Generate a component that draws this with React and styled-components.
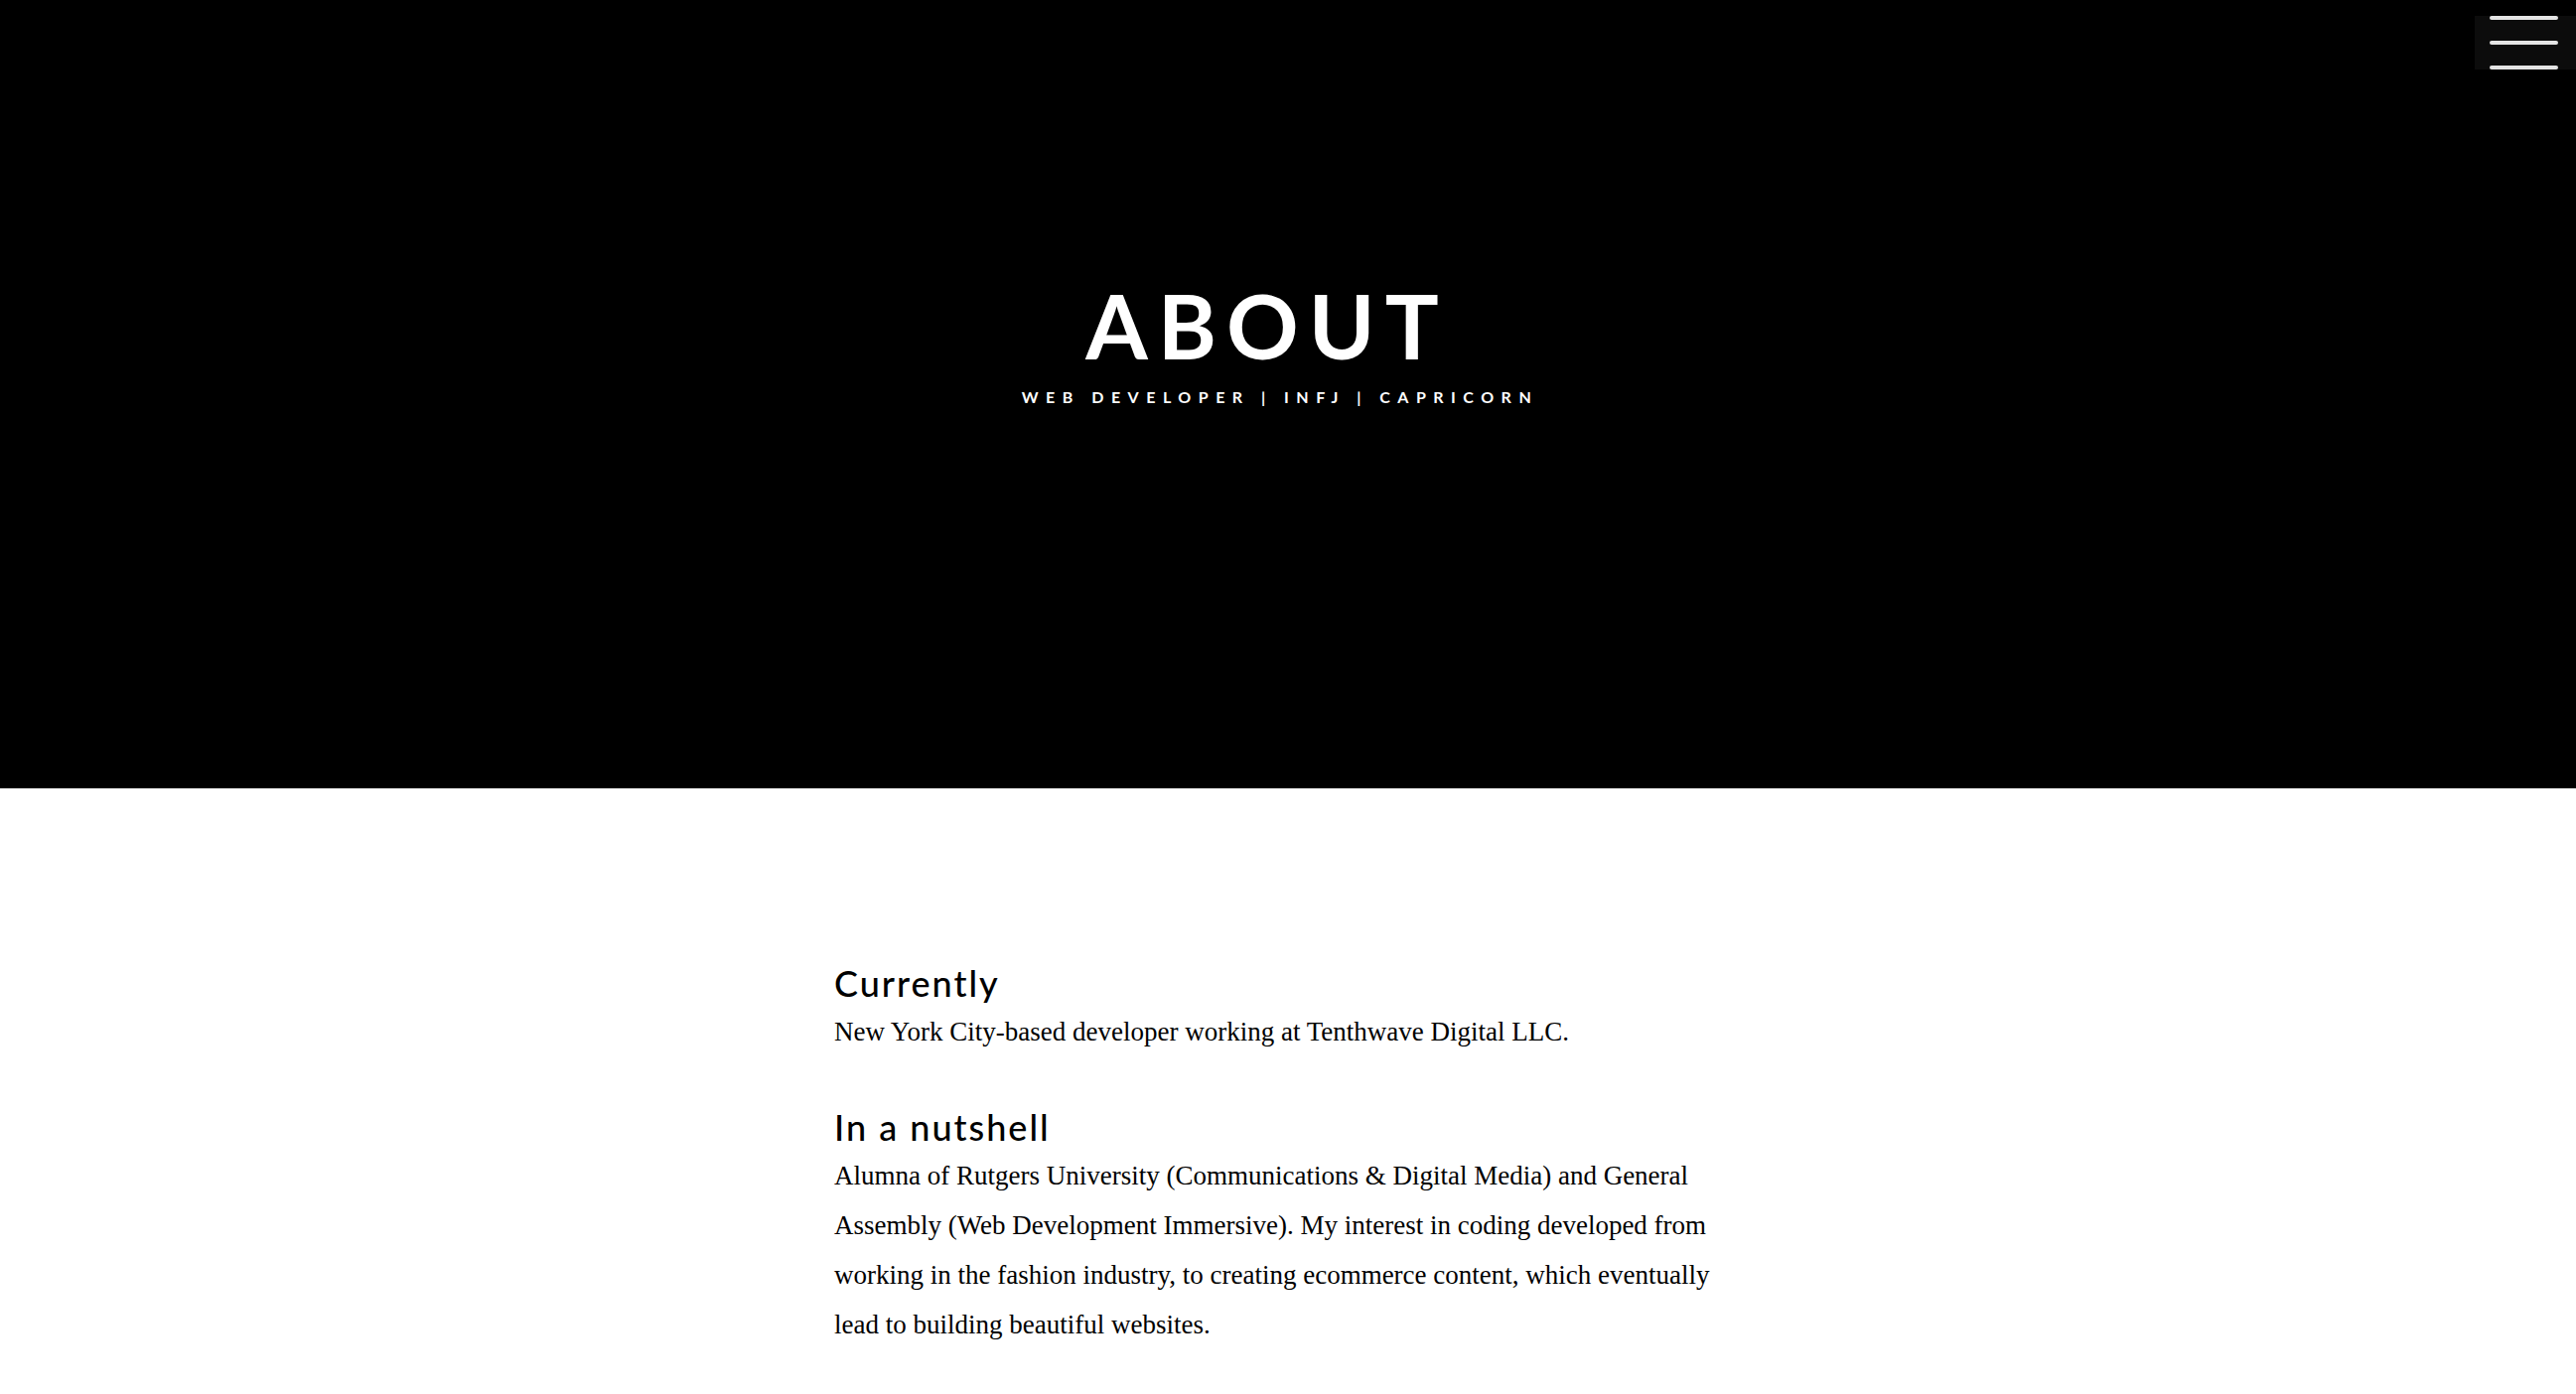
import styled, { createGlobalStyle } from 'styled-components';

const GlobalStyle = createGlobalStyle`
  html, body {
    margin: 0;
    padding: 0;
    background: #fff;
  }
  body {
    font-family: "Liberation Serif", "Times New Roman", serif;
    color: #000;
  }
`;

const sections = [
  {
    title: 'Currently',
    text: 'New York City-based developer working at Tenthwave Digital LLC.',
  },
  {
    title: 'In a nutshell',
    text:
      'Alumna of Rutgers University (Communications & Digital Media) and General Assembly (Web Development Immersive). My interest in coding developed from working in the fashion industry, to creating ecommerce content, which eventually lead to building beautiful websites.',
  },
];

export default function App() {
  return (
    <>
      <GlobalStyle />
      <Hero>
        <HeroTitle>ABOUT</HeroTitle>
        <HeroSubtitle>Web Developer | INFJ | Capricorn</HeroSubtitle>
        <MenuButton aria-label="menu">
          <MenuBar />
          <MenuBar />
          <MenuBar />
        </MenuButton>
      </Hero>
      <Content>
        {sections.map((s) => (
          <Section key={s.title}>
            <SectionTitle>{s.title}</SectionTitle>
            <SectionText>{s.text}</SectionText>
          </Section>
        ))}
      </Content>
    </>
  );
}

const Hero = styled.header`
  position: relative;
  box-sizing: border-box;
  height: 794px;
  padding-top: 282px;
  padding-right: 42px;
  background: #000;
  color: #fff;
  display: flex;
  flex-direction: column;
  align-items: center;
  font-family: Lato, "Open Sans", sans-serif;
`;

const HeroTitle = styled.h1`
  margin: 0;
  font-size: 90px;
  line-height: 1;
  font-weight: 700;
  letter-spacing: 10px;
`;

const HeroSubtitle = styled.p`
  margin: 20px 0 0;
  padding-left: 26px;
  font-size: 16px;
  line-height: 1;
  font-weight: 700;
  letter-spacing: 7.5px;
  text-transform: uppercase;
`;

const MenuButton = styled.button`
  position: absolute;
  top: 16px;
  right: 0;
  width: 102px;
  height: 54px;
  box-sizing: border-box;
  padding: 0 18px 0 15px;
  border: none;
  background: #0c0c0c;
  display: flex;
  flex-direction: column;
  justify-content: space-between;
  cursor: pointer;
`;

const MenuBar = styled.span`
  display: block;
  width: 69px;
  height: 4px;
  border-radius: 2px;
  background: #e4e4e4;
`;

const Content = styled.main`
  box-sizing: border-box;
  width: 914px;
  margin: 0 auto;
  padding: 175px 20px 0 0;
`;

const Section = styled.section`
  margin-bottom: 50px;
`;

const SectionTitle = styled.h2`
  margin: 0 0 3px;
  font-family: Lato, "Open Sans", sans-serif;
  font-size: 36px;
  line-height: 42px;
  font-weight: 500;
  letter-spacing: 2px;
`;

const SectionText = styled.p`
  margin: 0;
  font-size: 27px;
  line-height: 50px;
`;
